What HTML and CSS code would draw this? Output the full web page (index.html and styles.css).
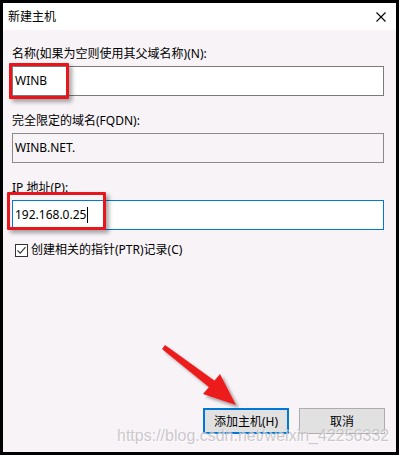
FILE: index.html
```html
<!DOCTYPE html>
<html lang="zh-CN">
<head>
    <meta charset="UTF-8">
    <meta name="viewport" content="width=device-width, initial-scale=1.0">
    <title>新建主机</title>
    <link rel="stylesheet" href="styles.css">
</head>
<body>
    <div class="dialog">
        <div class="titlebar">
            <span class="title">新建主机</span>
            <svg class="close" width="10" height="10" viewBox="0 0 10 10">
                <path d="M0.5 0.5 L9.5 9.5 M9.5 0.5 L0.5 9.5" stroke="#000" stroke-width="1.1" fill="none"/>
            </svg>
        </div>

        <div class="content">
            <div class="fields">
                <div class="field">
                    <div class="label">名称(如果为空则使用其父域名称)(N):</div>
                    <div class="input">WINB</div>
                </div>
                <div class="field">
                    <div class="label">完全限定的域名(FQDN):</div>
                    <div class="input readonly">WINB.NET.</div>
                </div>
                <div class="field">
                    <div class="label">IP 地址(P):</div>
                    <div class="input focused">192.168.0.25<span class="caret"></span></div>
                </div>
            </div>

            <div class="check">
                <span class="box">
                    <svg width="11" height="11" viewBox="0 0 11 11">
                        <path d="M1.5 5.5 L4.2 8.2 L9.5 2.2" stroke="#333" stroke-width="1.1" fill="none"/>
                    </svg>
                </span>
                创建相关的指针(PTR)记录(C)
            </div>

            <div class="buttons">
                <button class="btn primary">添加主机(H)</button>
                <button class="btn">取消</button>
            </div>
        </div>

        <!-- annotations drawn over the dialog -->
        <div class="mark mark-name"></div>
        <div class="mark mark-ip"></div>

        <svg class="arrow" width="399" height="455" viewBox="0 0 399 455">
            <defs>
                <filter id="shade" x="-20%" y="-20%" width="140%" height="140%">
                    <feDropShadow dx="3" dy="3" stdDeviation="1.5" flood-color="#000" flood-opacity="0.35"/>
                </filter>
            </defs>
            <g filter="url(#shade)" fill="#ec1c1c">
                <polygon points="162,349 165,345 215,381 210,388"/>
                <polygon points="236,405 203,394 220,374"/>
            </g>
        </svg>

        <div class="watermark">https://blog.csdn.net/weixin_42256332</div>
    </div>
</body>
</html>
```

FILE: styles.css
```css
body {
    margin: 0;
    width: 399px;
    height: 455px;
    overflow: hidden;
    background: #000;
    font-family: "Noto Sans", "Noto Sans CJK SC", sans-serif;
    font-size: 12px;
    color: #000;
}
.dialog {
    position: relative;
    margin: 3px;
    width: 393px;
    height: 449px;
    display: flex;
    flex-direction: column;
    background: #f7f3f7;
}
.titlebar {
    height: 27px;
    display: flex;
    align-items: center;
    justify-content: space-between;
    padding: 0 10px 0 5px;
    background: #fff;
}
.title {
    line-height: 16px;
}
.content {
    flex: 1;
    display: flex;
    flex-direction: column;
    padding: 16px 12px 18px 9px;
}
.fields {
    display: flex;
    flex-direction: column;
    gap: 17px;
}
.label {
    line-height: 16px;
    height: 16px;
    margin-bottom: 4px;
}
.input {
    box-sizing: border-box;
    height: 30px;
    line-height: 28px;
    padding: 0 2px;
    border: 1px solid #7a7a7a;
    background: #fff;
    display: flex;
    align-items: center;
}
.input.readonly {
    background: #f7f3f7;
    border-color: #8a8a8a;
}
.input.focused {
    border-color: #0078d7;
}
.caret {
    display: inline-block;
    width: 1px;
    height: 16px;
    margin-left: 1px;
    background: #000;
}
.check {
    margin-top: 12px;
    height: 16px;
    line-height: 16px;
    display: flex;
    align-items: center;
    gap: 3px;
    padding-left: 3px;
}
.box {
    box-sizing: border-box;
    width: 13px;
    height: 13px;
    border: 1px solid #333;
    background: #fff;
    display: flex;
}
.buttons {
    margin-top: auto;
    margin-right: -1px;
    display: flex;
    justify-content: flex-end;
    gap: 10px;
}
.btn {
    box-sizing: border-box;
    width: 86px;
    height: 26px;
    padding: 0;
    border: 1px solid #adadad;
    background: #e1e1e1;
    font-family: inherit;
    font-size: 12px;
    color: #000;
}
.btn.primary {
    border: 2px solid #0078d7;
}
.mark {
    position: absolute;
    box-sizing: border-box;
    border: 3px solid #e8161c;
    border-radius: 1px;
    box-shadow: 3px 3px 4px rgba(0, 0, 0, 0.35);
}
.mark-name {
    left: 6px;
    top: 60px;
    width: 60px;
    height: 36px;
}
.mark-ip {
    left: 4px;
    top: 189px;
    width: 99px;
    height: 38px;
}
.arrow {
    position: absolute;
    left: -3px;
    top: -3px;
    pointer-events: none;
}
.watermark {
    position: absolute;
    left: 114px;
    top: 424px;
    font-family: "Liberation Sans", sans-serif;
    font-size: 16px;
    line-height: 18px;
    color: rgba(196, 192, 196, 0.85);
    text-shadow: 1px 1px 0 rgba(255, 255, 255, 0.7);
    white-space: nowrap;
    pointer-events: none;
}
```
